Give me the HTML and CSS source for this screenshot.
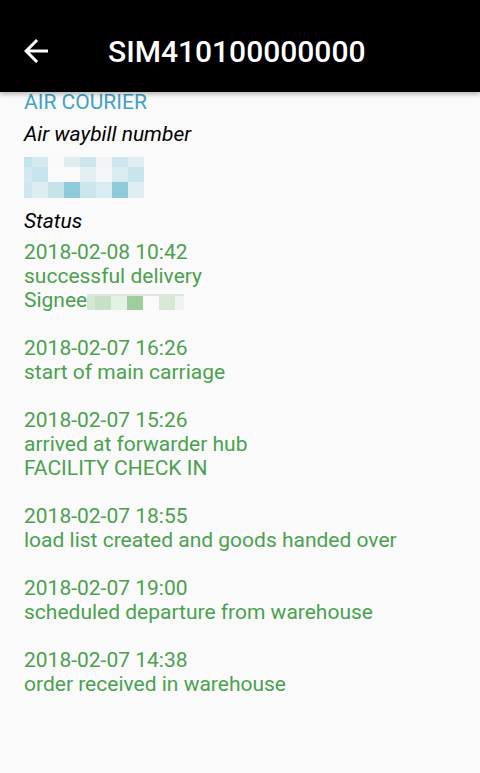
FILE: index.html
```html
<!DOCTYPE html>
<html lang="en">
<head>
    <meta charset="UTF-8">
    <meta name="viewport" content="width=device-width, initial-scale=1.0">
    <title>SIM410100000000</title>
	<link rel="stylesheet" href="styles.css">
</head>
<body>
    <div class="toolbar">
        <button class="back" aria-label="back">
            <svg width="36" height="36" viewBox="0 0 24 24"><path fill="#fff" d="M20 11H7.83l5.59-5.59L12 4l-8 8 8 8 1.41-1.41L7.83 13H20v-2z"/></svg>
        </button>
        <h1>SIM410100000000</h1>
    </div>
    <div class="content">
        <div class="carrier">AIR COURIER</div>
        <div class="label waybill-label">Air waybill number</div>
        <div class="mosaic waybill">
            <span style="background:#c5e3ea"></span><span style="background:#d5eaf0"></span><span style="background:#f8f9fa"></span><span style="background:#e0eef2"></span><span style="background:#cde6ee"></span><span style="background:#f2f5f6"></span><span style="background:#cfe6ee"></span><span style="background:#e0eef2"></span>
            <span style="background:#d3e9ef"></span><span style="background:#c6e4eb"></span><span style="background:#fafafa"></span><span style="background:#fafafa"></span><span style="background:#e2eff3"></span><span style="background:#f3f6f7"></span><span style="background:#d8ebf0"></span><span style="background:#c8e4ec"></span>
            <span style="background:#cfe6ee"></span><span style="background:#dceef2"></span><span style="background:#c6e3ea"></span><span style="background:#8fcadb"></span><span style="background:#cae5ec"></span><span style="background:#d8ebf1"></span><span style="background:#8fcadb"></span><span style="background:#dfeef2"></span>
        </div>
        <div class="label status-label">Status</div>
        <div class="events">
            <div class="event">
                <div>2018-02-08 10:42</div>
                <div>successful delivery</div>
                <div>Signee<span class="mosaic signee"><span style="background:#d4e8d4"></span><span style="background:#c6e2c6"></span><span style="background:#e6f1e6"></span><span style="background:#9ccf9c"></span><span style="background:#fafafa"></span><span style="background:#d5e9d5"></span><span style="background:#eef4ee"></span></span></div>
            </div>
            <div class="event">
                <div>2018-02-07 16:26</div>
                <div>start of main carriage</div>
            </div>
            <div class="event">
                <div>2018-02-07 15:26</div>
                <div>arrived at forwarder hub</div>
                <div>FACILITY CHECK IN</div>
            </div>
            <div class="event">
                <div>2018-02-07 18:55</div>
                <div>load list created and goods handed over</div>
            </div>
            <div class="event">
                <div>2018-02-07 19:00</div>
                <div>scheduled departure from warehouse</div>
            </div>
            <div class="event">
                <div>2018-02-07 14:38</div>
                <div>order received in warehouse</div>
            </div>
        </div>
    </div>
</body>
</html>
```
FILE: styles.css
```css
body {
	font-family: Roboto, "Liberation Sans", sans-serif;
	background-color: #fafafa;
	margin: 0;
	height: 773px;
	overflow: hidden;
}
.toolbar {
	position: relative;
	z-index: 2;
	height: 92px;
	background-color: #000;
	display: flex;
	align-items: center;
	padding-top: 10px;
	box-sizing: border-box;
	box-shadow: 0 2px 5px rgba(0,0,0,0.3);
}
.back {
	width: 36px;
	height: 36px;
	margin-left: 18px;
	padding: 0;
	border: none;
	background: none;
	display: flex;
}
.toolbar h1 {
	margin: 0 0 0 54px;
	color: #fff;
	font-size: 30px;
	font-weight: 500;
	letter-spacing: 0;
}
.content {
	margin-top: -2px;
	padding: 0 24px;
	font-size: 21px;
	line-height: 24px;
}
.carrier {
	color: #41a3c3;
}
.label {
	font-style: italic;
	color: #000;
}
.waybill-label {
	margin-top: 8px;
}
.mosaic {
	display: grid;
}
.mosaic.waybill {
	margin-top: 11px;
	width: 120px;
	height: 41px;
	grid-template-columns: 8px repeat(7, 16px);
	grid-template-rows: 10px 15px 16px;
}
.status-label {
	margin-top: 11px;
}
.events {
	margin-top: 7px;
	color: #4ba14f;
}
.event {
	margin-bottom: 24px;
}
.mosaic.signee {
	display: inline-grid;
	vertical-align: -3px;
	width: 97px;
	height: 16px;
	grid-template-columns: 8px repeat(5, 16px) 9px;
	border-top: 2px solid #e2e6e2;
	box-sizing: border-box;
}
```
